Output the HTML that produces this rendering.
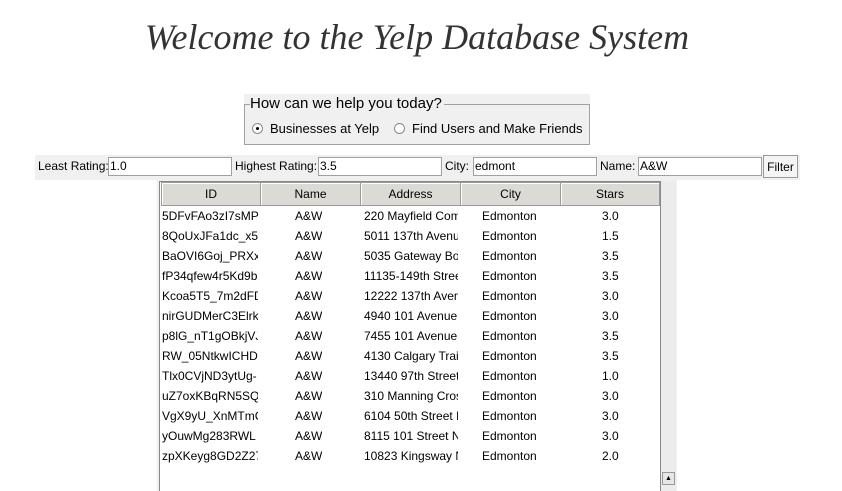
<!DOCTYPE html>
<html><head><meta charset="utf-8"><style>
body{margin:0;width:842px;height:491px;background:#fff;position:relative;overflow:hidden;font-family:"Liberation Sans",sans-serif;font-size:12px;color:#000}
.a{position:absolute}
h1{position:absolute;left:137px;top:16px;width:560px;margin:0;font:italic 36px "Liberation Serif",serif;color:#333;white-space:nowrap;text-align:center;letter-spacing:0px}
.inp{position:absolute;height:19px;background:#fff;border:1px solid #a0a0a0;box-sizing:border-box;font-size:12px;line-height:17px;padding-left:1px}
.lbl{position:absolute;font-size:12px;line-height:19px}
.hd{position:absolute;top:182px;height:24px;background:#dcdad5;border:1px solid #9a9a9a;box-sizing:border-box;text-align:center;line-height:22px;box-shadow:inset 1px 1px 0 #fff}
.row{position:absolute;left:161px;width:499px;height:20px;line-height:21px;font-size:12px}
.row span{position:absolute;overflow:hidden;white-space:nowrap}
</style></head><body>
<h1>Welcome to the Yelp Database System</h1>
<div class="a" style="left:244px;top:94px;width:346px;height:51px;background:#f0f0f0"></div>
<div class="a" style="left:244px;top:104px;width:344px;height:39px;border:1px solid #a0a0a0"></div>
<div class="a" style="left:250px;top:95px;background:#f0f0f0;font-size:15px;line-height:18px;padding-right:2px">How can we help you today?</div>
<div class="a" style="left:252px;top:123px;width:9px;height:9px;border:1px solid #888;border-radius:50%;background:#fff"></div>
<div class="a" style="left:256px;top:127px;width:3px;height:3px;border-radius:50%;background:#000"></div>
<div class="a" style="left:270px;top:121px;font-size:13px">Businesses at Yelp</div>
<div class="a" style="left:394px;top:123px;width:9px;height:9px;border:1px solid #888;border-radius:50%;background:#fff"></div>
<div class="a" style="left:412px;top:121px;font-size:13px">Find Users and Make Friends</div>

<div class="a" style="left:35px;top:155px;width:765px;height:25px;background:#f0f0f0"></div>
<div class="lbl" style="left:38px;top:157px">Least Rating:</div>
<div class="inp" style="left:108px;top:157px;width:124px">1.0</div>
<div class="lbl" style="left:235px;top:157px">Highest Rating:</div>
<div class="inp" style="left:318px;top:157px;width:124px">3.5</div>
<div class="lbl" style="left:445px;top:157px">City:</div>
<div class="inp" style="left:473px;top:157px;width:124px">edmont</div>
<div class="lbl" style="left:600px;top:157px">Name:</div>
<div class="inp" style="left:638px;top:157px;width:124px">A&amp;W</div>
<div class="a" style="left:763px;top:155px;width:35px;height:23px;border:1px solid #999;background:#f4f4f4;line-height:22px;text-align:center;box-sizing:border-box">Filter</div>

<div class="a" style="left:157px;top:180px;width:520px;height:311px;background:#f0f0f0"></div>
<div class="a" style="left:159px;top:181px;width:502px;height:310px;background:#fff;border:1px solid #888;border-bottom:none;box-sizing:border-box"></div>
<div class="a" style="left:661px;top:181px;width:15px;height:310px;background:#ececec"></div>
<div class="a" style="left:662px;top:472px;width:13px;height:13px;border:1px solid #999;box-sizing:border-box;background:#e6e6e6;font-size:7px;text-align:center;line-height:11px">▲</div>
<div class="hd" style="left:161px;width:100px">ID</div>
<div class="hd" style="left:260px;width:101px">Name</div>
<div class="hd" style="left:360px;width:101px">Address</div>
<div class="hd" style="left:460px;width:101px">City</div>
<div class="hd" style="left:560px;width:100px">Stars</div>

<div class="row" style="top:206px"><span style="left:1px;width:96px">5DFvFAo3zI7sMP:</span><span style="left:134px">A&amp;W</span><span style="left:203px;width:94px">220 Mayfield Com</span><span style="left:321px">Edmonton</span><span style="left:441px">3.0</span></div>
<div class="row" style="top:226px"><span style="left:1px;width:96px">8QoUxJFa1dc_x5b</span><span style="left:134px">A&amp;W</span><span style="left:203px;width:94px">5011 137th Avenue</span><span style="left:321px">Edmonton</span><span style="left:441px">1.5</span></div>
<div class="row" style="top:246px"><span style="left:1px;width:96px">BaOVI6Goj_PRXxS</span><span style="left:134px">A&amp;W</span><span style="left:203px;width:94px">5035 Gateway Bou</span><span style="left:321px">Edmonton</span><span style="left:441px">3.5</span></div>
<div class="row" style="top:266px"><span style="left:1px;width:96px">fP34qfew4r5Kd9b</span><span style="left:134px">A&amp;W</span><span style="left:203px;width:94px">11135-149th Street</span><span style="left:321px">Edmonton</span><span style="left:441px">3.5</span></div>
<div class="row" style="top:286px"><span style="left:1px;width:96px">Kcoa5T5_7m2dFD</span><span style="left:134px">A&amp;W</span><span style="left:203px;width:94px">12222 137th Avenue</span><span style="left:321px">Edmonton</span><span style="left:441px">3.0</span></div>
<div class="row" style="top:306px"><span style="left:1px;width:96px">nirGUDMerC3Elrk</span><span style="left:134px">A&amp;W</span><span style="left:203px;width:94px">4940 101 Avenue</span><span style="left:321px">Edmonton</span><span style="left:441px">3.0</span></div>
<div class="row" style="top:326px"><span style="left:1px;width:96px">p8lG_nT1gOBkjVJ</span><span style="left:134px">A&amp;W</span><span style="left:203px;width:94px">7455 101 Avenue</span><span style="left:321px">Edmonton</span><span style="left:441px">3.5</span></div>
<div class="row" style="top:346px"><span style="left:1px;width:96px">RW_05NtkwICHD</span><span style="left:134px">A&amp;W</span><span style="left:203px;width:94px">4130 Calgary Trail</span><span style="left:321px">Edmonton</span><span style="left:441px">3.5</span></div>
<div class="row" style="top:366px"><span style="left:1px;width:96px">Tlx0CVjND3ytUg-</span><span style="left:134px">A&amp;W</span><span style="left:203px;width:94px">13440 97th Street</span><span style="left:321px">Edmonton</span><span style="left:441px">1.0</span></div>
<div class="row" style="top:386px"><span style="left:1px;width:96px">uZ7oxKBqRN5SQ.</span><span style="left:134px">A&amp;W</span><span style="left:203px;width:94px">310 Manning Cross</span><span style="left:321px">Edmonton</span><span style="left:441px">3.0</span></div>
<div class="row" style="top:406px"><span style="left:1px;width:96px">VgX9yU_XnMTmC</span><span style="left:134px">A&amp;W</span><span style="left:203px;width:94px">6104 50th Street NW</span><span style="left:321px">Edmonton</span><span style="left:441px">3.0</span></div>
<div class="row" style="top:426px"><span style="left:1px;width:96px">yOuwMg283RWL</span><span style="left:134px">A&amp;W</span><span style="left:203px;width:94px">8115 101 Street NW</span><span style="left:321px">Edmonton</span><span style="left:441px">3.0</span></div>
<div class="row" style="top:446px"><span style="left:1px;width:96px">zpXKeyg8GD2Z27</span><span style="left:134px">A&amp;W</span><span style="left:203px;width:94px">10823 Kingsway NW</span><span style="left:321px">Edmonton</span><span style="left:441px">2.0</span></div>
</body></html>
